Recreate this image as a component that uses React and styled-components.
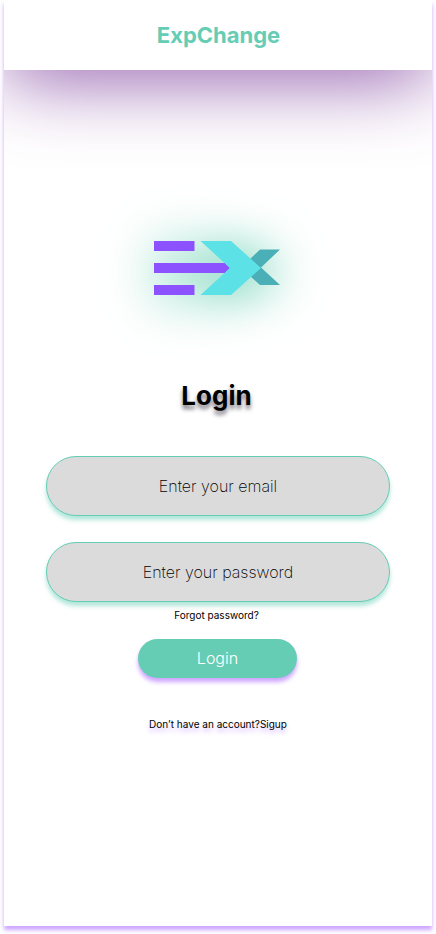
import React from "react";
import styled, { createGlobalStyle } from "styled-components";

const GlobalStyle = createGlobalStyle`
  * { box-sizing: border-box; }
  body { margin: 0; background: #fff; font-family: Inter, sans-serif; }
`;

const Page = styled.div`
  height: 934px;
  overflow: hidden;
  background: #fff;
`;

const Screen = styled.main`
  display: flex;
  flex-direction: column;
  align-items: center;
  width: 428px;
  height: 926px;
  margin: 0 auto;
  overflow: hidden;
  background: #fff;
  box-shadow: 0 4px 4px rgba(157, 78, 255, 0.5);
`;

const Header = styled.header`
  display: flex;
  flex: none;
  align-items: center;
  justify-content: center;
  width: 100%;
  height: 70px;
  padding-left: 1px;
  background: #fff;
  box-shadow: 0 4px 80px rgb(128, 67, 159);
`;

const Brand = styled.h1`
  margin: 0;
  color: #66cdb5;
  font-size: 22px;
  font-weight: 700;
  line-height: 27px;
`;

const Logo = styled.svg`
  flex: none;
  display: block;
  width: 126px;
  height: 54px;
  margin-top: 171px;
  margin-left: -2px;
  overflow: visible;
  filter: drop-shadow(0 4px 25px #4fc7a6);
`;

const Title = styled.h2`
  margin: 85px 0 0;
  padding-right: 3px;
  color: #000;
  font-size: 26px;
  font-weight: 700;
  line-height: 32px;
  text-shadow: 0 4px 4px rgba(10, 0, 20, 0.55);
`;

const Form = styled.form`
  display: flex;
  flex-direction: column;
  align-items: center;
  width: 344px;
  margin-top: 44px;
`;

const Field = styled.input`
  width: 100%;
  height: 60px;
  margin: 0 0 ${(p) => p.$gap}px;
  padding: 0;
  border: 1px solid #66cdb5;
  border-radius: 30px;
  outline: none;
  background: #dbdbdb;
  box-shadow: 0 4px 4px rgba(102, 205, 181, 0.5);
  color: #000;
  font: 200 16px Inter, sans-serif;
  text-align: center;

  &::placeholder { color: #000; opacity: 1; }
`;

const SmallText = styled.p`
  margin: 0;
  padding-right: ${(p) => p.$inset}px;
  color: #000;
  font-size: 10px;
  line-height: 12px;
  white-space: nowrap;
  text-shadow: ${(p) => (p.$glow ? "0 4px 4px rgba(157, 78, 255, 0.4)" : "none")};
`;

const SubmitButton = styled.button`
  width: 159px;
  height: 39px;
  margin: 18px 1px 40px 0;
  padding: 0 0 2px;
  border: 0;
  border-radius: 20px;
  background: #66cdb5;
  box-shadow: 0 4px 4px rgba(157, 78, 255, 0.5);
  color: #fff;
  font: 300 16px Inter, sans-serif;
`;

export default function App() {
  return (
    <Page>
      <GlobalStyle />
      <Screen>
        <Header>
          <Brand>ExpChange</Brand>
        </Header>
        <Logo viewBox="0 0 126 54" aria-hidden="true">
          <path fill="#8c52ff" d="M0 0H40.5V10H0ZM0 22H71L76 27L71 32H0ZM0 44H40.5V54H0Z" />
          <path fill="#4aafb7" d="M96 18L106 8.5H126L107 26.5L126 44H106L96 35Z" />
          <path fill="#5ce1e6" d="M46.5 0H77L107 27L77 54H46.5L76 27Z" />
        </Logo>
        <Title>Login</Title>
        <Form onSubmit={(event) => event.preventDefault()}>
          <Field type="email" placeholder="Enter your email" $gap={26} />
          <Field type="password" placeholder="Enter your password" $gap={7} />
          <SmallText $inset={3}>Forgot password?</SmallText>
          <SubmitButton type="submit">Login</SubmitButton>
          <SmallText $inset={0} $glow>
            Don’t have an account?Sigup
          </SmallText>
        </Form>
      </Screen>
    </Page>
  );
}
